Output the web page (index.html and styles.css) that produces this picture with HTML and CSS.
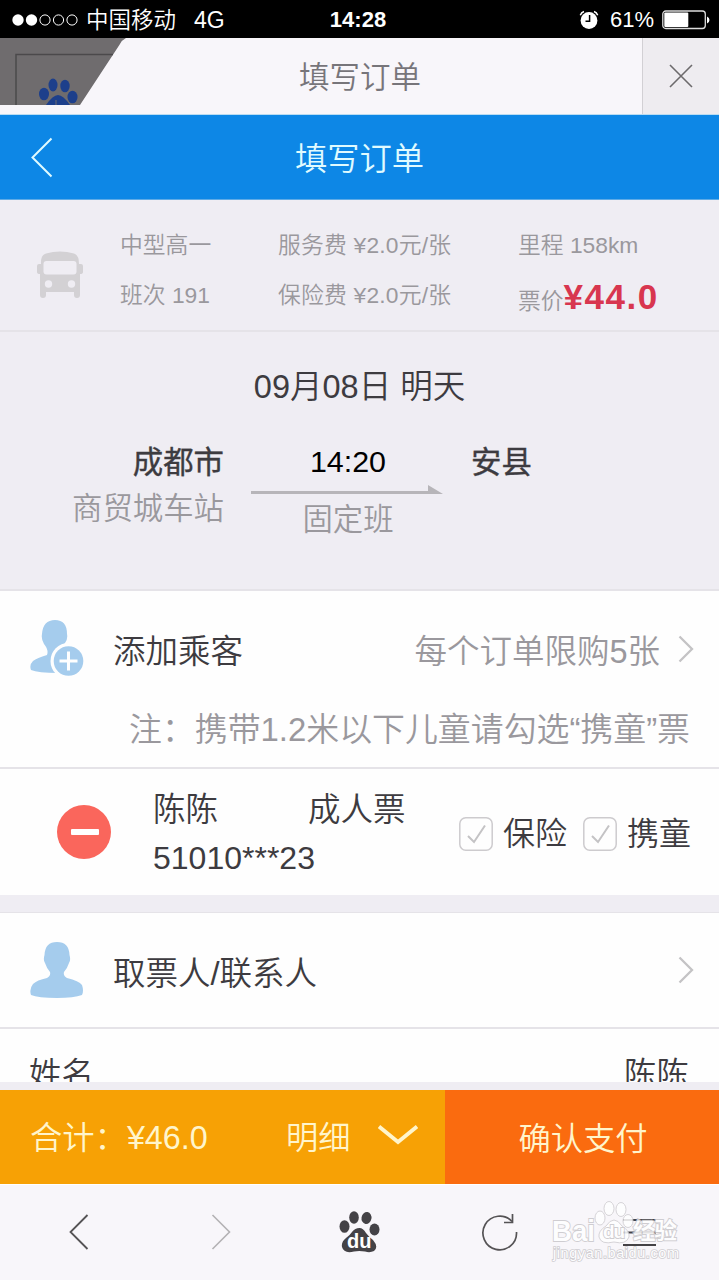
FILE: index.html
```html
<!DOCTYPE html>
<html lang="zh">
<head>
    <meta charset="UTF-8" />
    <title>填写订单</title>
    <link rel="stylesheet" href="styles.css">
</head>
<body>
    <div class="phone">
        <div class="status-bar">
            <div class="status-left">
                <svg class="signal" width="68" height="14" viewBox="0 0 68 14">
                    <circle cx="6" cy="7" r="5.7" fill="#fff" />
                    <circle cx="19.5" cy="7" r="5.7" fill="#fff" />
                    <g fill="none" stroke="#fff" stroke-width="1">
                        <circle cx="33" cy="7" r="5.1" />
                        <circle cx="46.5" cy="7" r="5.1" />
                        <circle cx="60" cy="7" r="5.1" />
                    </g>
                </svg>
                <span class="carrier">中国移动</span>
                <span>4G</span>
            </div>
            <div class="status-time">14:28</div>
            <div class="status-right">
                <svg width="20" height="20" viewBox="0 0 20 20">
                    <circle cx="10" cy="10.5" r="8.4" fill="#fff" />
                    <path d="M1.3 5.2Q2.3 2.5 5 1.5M18.7 5.2Q17.7 2.5 15 1.5" fill="none" stroke="#fff" stroke-width="1.5" />
                    <path d="M10.6 5V11.2H6.5" fill="none" stroke="#000" stroke-width="1.5" />
                </svg>
                <span class="percent">61%</span>
                <svg width="48" height="20" viewBox="0 0 48 20">
                    <rect x="0.8" y="1" width="42.5" height="17.5" rx="3" fill="none" stroke="#ddd" stroke-width="1.3" />
                    <rect x="2.3" y="2.5" width="24" height="14.5" rx="1" fill="#fff" />
                    <path d="M45 6.5Q47.5 7.5 47.5 10Q47.5 12.5 45 13.5Z" fill="#fff" />
                </svg>
            </div>
        </div>

        <div class="tab-bar">
            <svg class="tab-prev" width="126" height="67" viewBox="0 0 126 67">
                <path d="M0 0H126Q122 2 120 6L80 67H0Z" fill="#6f6c6e" />
                <path d="M16 67V16.5H113" fill="none" stroke="#4b494b" stroke-width="1.5" />
                <g fill="#1d3f8b">
                    <ellipse cx="44" cy="56" rx="5" ry="6.3" />
                    <ellipse cx="53" cy="47" rx="4.5" ry="6.5" />
                    <ellipse cx="65" cy="48" rx="4.7" ry="6.3" />
                    <ellipse cx="72.5" cy="59" rx="5" ry="6.3" />
                    <path d="M46 67Q53 57 58 57Q63 57 70 67Z" />
                </g>
                <path d="M56 62V67" stroke="#6f6c6e" />
            </svg>
            <div class="tab-title">填写订单</div>
            <div class="tab-close">
                <svg width="24" height="24" viewBox="0 0 24 24" fill="none" stroke="#6c6a6c" stroke-width="1.6">
                    <path d="M1 1L23 23M23 1L1 23" />
                </svg>
            </div>
        </div>

        <div class="header">
            <svg class="header-back" width="22" height="42" viewBox="0 0 22 42" fill="none" stroke="#e0fbff" stroke-width="2">
                <path d="M20.5 1.5L1.5 20.5L20.5 39.5" />
            </svg>
            <h1>填写订单</h1>
        </div>

        <div class="info">
            <svg class="bus" width="46" height="47" viewBox="0 0 46 47">
                <path fill="#d3d1d4" d="M4 13Q3.5 4 9 2.5Q23 -1.5 37 2.5Q42 4 42 13H44Q46 13 46 15V21Q46 23 43 23V44Q43 47 40 47Q37 47 37 44V41H9V44Q9 47 6 47Q3 47 3 44V23Q0 23 0 21V15Q0 13 2 13Z" />
                <g fill="#efedf3">
                    <rect x="6.5" y="10" width="33" height="13.5" rx="3" />
                    <circle cx="11.5" cy="33" r="3.7" />
                    <circle cx="34.5" cy="33" r="3.7" />
                </g>
            </svg>
            <div class="info-col col-type">
                <p>中型高一</p>
                <p>班次 191</p>
            </div>
            <div class="info-col col-fee">
                <p>服务费 ¥2.0元/张</p>
                <p>保险费 ¥2.0元/张</p>
            </div>
            <div class="info-col">
                <p>里程 158km</p>
                <p class="fare">票价<b>¥44.0</b></p>
            </div>
        </div>

        <div class="trip">
            <div class="trip-date">09月08日 明天</div>
            <div class="trip-route">
                <div class="from">
                    <div class="city">成都市</div>
                    <div class="station">商贸城车站</div>
                </div>
                <div class="way">
                    <div class="time">14:20</div>
                    <svg width="192" height="10" viewBox="0 0 192 10">
                        <path d="M0 6H177V0L192 9H0Z" fill="#b7b5b9" />
                    </svg>
                    <div class="shift">固定班</div>
                </div>
                <div class="city">安县</div>
            </div>
        </div>

        <div class="add">
            <div class="add-row">
                <svg width="54" height="57" viewBox="0 0 54 57">
                    <path fill="#a5cced" d="M25 0Q37 0 37 14Q38 19 35 23Q31 28 31 33Q45 37 53 43V50Q45 53 28 53Q8 53 1 50Q-1 45 3 41Q7 38 17 35Q19 30 14 24Q11 19 12 14Q13 0 25 0Z" />
                    <circle cx="38.5" cy="41" r="18" fill="#fefefe" />
                    <circle cx="38.5" cy="41" r="14.8" fill="#a5cced" />
                    <path d="M29.5 41H47.5M38.5 31.5V50.5" stroke="#fff" stroke-width="3" />
                </svg>
                <span class="row-title">添加乘客</span>
                <span class="limit">每个订单限购5张</span>
                <svg class="arrow" width="16" height="28" viewBox="0 0 16 28" fill="none" stroke="#c4c3c5" stroke-width="2.3">
                    <path d="M1.5 1.5L14 14L1.5 26.5" />
                </svg>
            </div>
            <p class="note">注：携带1.2米以下儿童请勾选“携童”票</p>
        </div>

        <div class="passenger">
            <svg class="remove" width="54" height="54" viewBox="0 0 54 54">
                <circle cx="27" cy="27" r="27" fill="#fa665c" />
                <rect x="14" y="24" width="28" height="6" rx="1" fill="#fff" />
            </svg>
            <div class="person">
                <div class="person-name"><span>陈陈</span><span>成人票</span></div>
                <div class="person-id">51010***23</div>
            </div>
            <div class="option">
                <svg width="34" height="34" viewBox="0 0 34 34" fill="none">
                    <rect x="0.8" y="0.8" width="32.4" height="32.4" rx="6" stroke="#cdcbce" stroke-width="1.5" />
                    <path d="M9 19L15 25L26 8.5" stroke="#c4c3c5" stroke-width="2" />
                </svg>
                <span>保险</span>
            </div>
            <div class="option">
                <svg width="34" height="34" viewBox="0 0 34 34" fill="none">
                    <rect x="0.8" y="0.8" width="32.4" height="32.4" rx="6" stroke="#cdcbce" stroke-width="1.5" />
                    <path d="M9 19L15 25L26 8.5" stroke="#c4c3c5" stroke-width="2" />
                </svg>
                <span>携童</span>
            </div>
        </div>

        <div class="contact">
            <svg width="54" height="57" viewBox="0 0 54 57">
                <path fill="#a5cced" d="M27 0Q39 0 39.5 13Q41 18 39 21Q37 27 34 30Q33 34 37 36Q49 39 52 43Q54 49 52 53Q44 56 27 56Q8 56 1 53Q-1 47 3 42Q7 38 17 36Q21 34 20 30Q17 27 15 21Q13 18 14.5 13Q15 0 27 0Z" />
            </svg>
            <span class="row-title">取票人/联系人</span>
            <svg class="arrow" width="16" height="28" viewBox="0 0 16 28" fill="none" stroke="#c4c3c5" stroke-width="2.3">
                <path d="M1.5 1.5L14 14L1.5 26.5" />
            </svg>
        </div>

        <div class="name-row">
            <span>姓名</span>
            <span>陈陈</span>
        </div>

        <div class="pay-bar">
            <div class="total">
                <span class="sum">合计：¥46.0</span>
                <span class="detail">明细</span>
                <svg width="40" height="20" viewBox="0 0 40 20" fill="none" stroke="#fff5cc" stroke-width="3.8">
                    <path d="M1 1.5L20 17L39 1.5" />
                </svg>
            </div>
            <div class="pay">确认支付</div>
        </div>

        <div class="toolbar">
            <svg class="tool-back" width="20" height="36" viewBox="0 0 20 36" fill="none" stroke="#555355" stroke-width="1.8">
                <path d="M18.5 1L1.5 18L18.5 35" />
            </svg>
            <svg class="tool-next" width="20" height="36" viewBox="0 0 20 36" fill="none" stroke="#b3b1b4" stroke-width="1.6">
                <path d="M1.5 1L18.5 18L1.5 35" />
            </svg>
            <svg class="tool-home" width="42" height="42" viewBox="0 0 42 42">
                <g fill="#444246">
                    <ellipse cx="5.5" cy="15.5" rx="5" ry="6.3" />
                    <ellipse cx="15" cy="6.5" rx="4.8" ry="6.2" />
                    <ellipse cx="27.5" cy="7" rx="5" ry="6" transform="rotate(10 27.5 7)" />
                    <ellipse cx="35.5" cy="18.5" rx="5" ry="6" />
                    <path d="M20.5 17Q24 17 27 22Q30 26 34 29Q40 36 35 40Q31 42 26 40.5Q20 39.5 15 40.5Q5 43 3 36Q2 31 7 27Q11 24 13 21Q16 17 20.5 17Z" />
                </g>
                <text x="8" y="37" class="du">du</text>
            </svg>
            <svg class="tool-reload" width="38" height="38" viewBox="0 0 38 38" fill="none" stroke="#555355" stroke-width="1.7">
                <path d="M35.5 19A16.8 16.8 0 1 1 31 8.5" />
                <path d="M31.5 1V9.5H23" />
            </svg>
            <svg class="tool-menu" width="33" height="28" viewBox="0 0 33 28" stroke="#444246" stroke-width="1.8">
                <path d="M0 2H33M0 14.5H33M0 27H33" />
            </svg>
            <svg class="watermark" width="136" height="72" viewBox="0 0 136 72">
                <g fill="#fff" stroke="#d0ced2" stroke-width="1">
                    <ellipse cx="53" cy="23" rx="5" ry="7" />
                    <ellipse cx="62" cy="13.5" rx="5" ry="7" />
                    <ellipse cx="74" cy="14.5" rx="5" ry="7" />
                    <ellipse cx="81" cy="26" rx="5" ry="6.5" />
                    <path d="M67 25Q71 25 75 31Q83 36 82 42Q79 50 67 47Q54 50 52 42Q51 36 59 31Q63 25 67 25Z" />
                </g>
                <g class="mark">
                    <text x="5" y="46" font-size="29" textLength="43" lengthAdjust="spacingAndGlyphs">Bai</text>
                    <text x="56" y="43" font-size="19" textLength="22">du</text>
                    <text x="86" y="44" font-size="22.5" textLength="44">经验</text>
                    <text x="6" y="63" font-size="14.5" textLength="126" class="mark-url">jingyan.baidu.com</text>
                </g>
            </svg>
        </div>
    </div>
</body>
</html>
```
FILE: styles.css
```css
body {
    margin: 0;
    font-family: "Liberation Sans", "Noto Sans CJK SC", sans-serif;
    font-weight: 350;
    background: #efedf3;
    color: #3d3b40;
}
p, h1 { margin: 0; }
svg { display: block; flex-shrink: 0; }
.phone {
    width: 719px;
    height: 1280px;
    overflow: hidden;
    display: flex;
    flex-direction: column;
}
.phone > div {
    box-sizing: border-box;
    flex-shrink: 0;
}

/* 状态栏 */
.status-bar {
    height: 38px;
    background: #000;
    color: #fff;
    display: grid;
    grid-template-columns: 1fr auto 1fr;
    align-items: center;
    padding: 2px 9px 0 12px;
    font-size: 23px;
}
.status-left, .status-right {
    display: flex;
    align-items: center;
}
.status-right { justify-content: flex-end; }
.carrier {
    margin: 1px 18px 0 6px;
    font-size: 22.5px;
    line-height: 32px;
}
.status-time { font-weight: bold; font-size: 22px; margin-left: -6px; }
.percent { margin: 0 8px 0 11px; font-size: 22px; }

/* 浏览器标签 */
.tab-bar {
    height: 77px;
    background: #f8f6fa;
    border-bottom: 1px solid #b9dcf2;
    display: flex;
}
.tab-title {
    flex: 1;
    padding-right: 48px;
    text-align: center;
    line-height: 78px;
    font-size: 30.5px;
    color: #77757a;
}
.tab-close {
    width: 76px;
    border-left: 1px solid #d2d0d4;
    background: #eeecf0;
    display: flex;
    align-items: center;
    justify-content: center;
}

.header {
    height: 85px;
    background: #0d87e6;
    border-bottom: 1px solid #5fabe6;
    display: flex;
    align-items: center;
}
.header-back { margin: 2px 0 0 31px; }
.header h1 {
    flex: 1;
    margin-right: 53px;
    text-align: center;
    font-size: 32.3px;
    line-height: 80px;
    padding-top: 3px;
    font-weight: 350;
    color: #e0fbff;
}

/* 车次信息 */
.info {
    height: 132px;
    border-bottom: 2px solid #e5e3e8;
    display: flex;
    padding: 20px 0 0 37px;
    font-size: 22.8px;
    line-height: 50px;
    color: #9a989d;
    white-space: nowrap;
}
.bus { margin: 31px 37px 0 0; }
.col-type { width: 158px; }
.col-fee { width: 240px; letter-spacing: 0.2px; }
.fare { padding-top: 2px; }
.fare b {
    font-size: 35px;
    font-weight: bold;
    letter-spacing: 1.5px;
    line-height: 50px;
    color: #d8364f;
}

/* 行程 */
.trip {
    height: 259px;
    border-bottom: 2px solid #e5e3e8;
    padding-top: 30px;
}
.trip-date {
    text-align: center;
    font-size: 32.5px;
    line-height: 50px;
}
.trip-route {
    display: flex;
    margin-top: 27px;
    font-size: 30.4px;
    line-height: 46px;
}
.from {
    width: 224px;
    margin-right: 27px;
    text-align: right;
}
.way {
    width: 192px;
    margin-right: 28px;
    text-align: center;
}
.city {
    font-weight: 400;
    -webkit-text-stroke: 0.4px #3d3b40;
}
.time {
    color: #000;
    line-height: 44px;
    padding-left: 2px;
}
.way svg { margin-top: 2px; }
.station, .shift { color: #9a989d; }
.shift { margin-top: 1px; padding-left: 2px; }

/* 添加乘客 */
.add, .passenger, .contact, .name-row {
    background: #fefefe;
    font-size: 32.5px;
    white-space: nowrap;
}
.add {
    height: 178px;
    border-bottom: 2px solid #e5e3e8;
}
.add-row {
    display: flex;
    align-items: center;
    padding: 0 25px 0 30px;
    height: 115px;
}
.row-title { margin-left: 29px; }
.limit { margin-left: auto; color: #9a989d; }
.arrow { margin-left: 18px; }
.note {
    padding-right: 29px;
    text-align: right;
    font-size: 32.9px;
    line-height: 48px;
    color: #9a989d;
}
.passenger {
    height: 126px;
    display: flex;
    align-items: center;
    padding-left: 57px;
}
.person {
    width: 306px;
    margin: 4px 0 0 42px;
    line-height: 48px;
}
.person-name span { margin-right: 90px; }
.person-name span:last-child { margin-right: 0; }
.person-id { font-size: 32px; }
.option {
    display: flex;
    align-items: center;
    gap: 10px;
    margin-right: 16px;
    margin-top: 4px;
    font-size: 32px;
    line-height: 40px;
}

.contact {
    height: 117px;
    margin-top: 17px;
    border-top: 1px solid #e5e3e8;
    border-bottom: 2px solid #e5e3e8;
    display: flex;
    align-items: center;
    padding: 0 25px 0 30px;
}
.contact .arrow { margin-left: auto; }
.name-row {
    height: 53px;
    overflow: hidden;
    display: flex;
    justify-content: space-between;
    padding: 0 30px 0 29px;
    line-height: 93px;
}

/* 底部支付 */
.pay-bar {
    height: 94px;
    margin-top: auto;
    display: flex;
    font-size: 32.3px;
    line-height: 98px;
    color: #fff5cc;
}
.total {
    width: 445px;
    background: #f7a105;
    display: flex;
    align-items: center;
    padding-left: 30px;
    box-sizing: border-box;
}
.sum, .detail { padding-top: 2px; }
.sum { width: 256px; }
.detail { margin-right: 27px; }
.total svg { margin-top: -5px; }
.pay {
    flex: 1;
    padding-left: 2px;
    text-align: center;
    background: #fa6b0f;
}

.toolbar {
    height: 96px;
    background: #f8f6fa;
    border-top: 1px solid #fff;
    display: flex;
    align-items: center;
    padding: 0 0 2px 69px;
    position: relative;
}
.tool-next { margin-left: 122px; }
.tool-home { margin-left: 108px; }
.tool-reload { margin-left: 100px; }
.tool-menu { margin-left: 104px; }
.du {
    font: bold 20px "Liberation Sans", sans-serif;
    fill: #fff;
}
/* 右下角水印 */
.watermark {
    position: absolute;
    left: 547px;
    top: 10px;
    opacity: 0.85;
}
.mark {
    font-weight: bold;
    fill: #fff;
    stroke: #c8c6ca;
    stroke-width: 1.8px;
    paint-order: stroke;
}
.mark-url {
    font-weight: normal;
    stroke-width: 1.6px;
}
```
